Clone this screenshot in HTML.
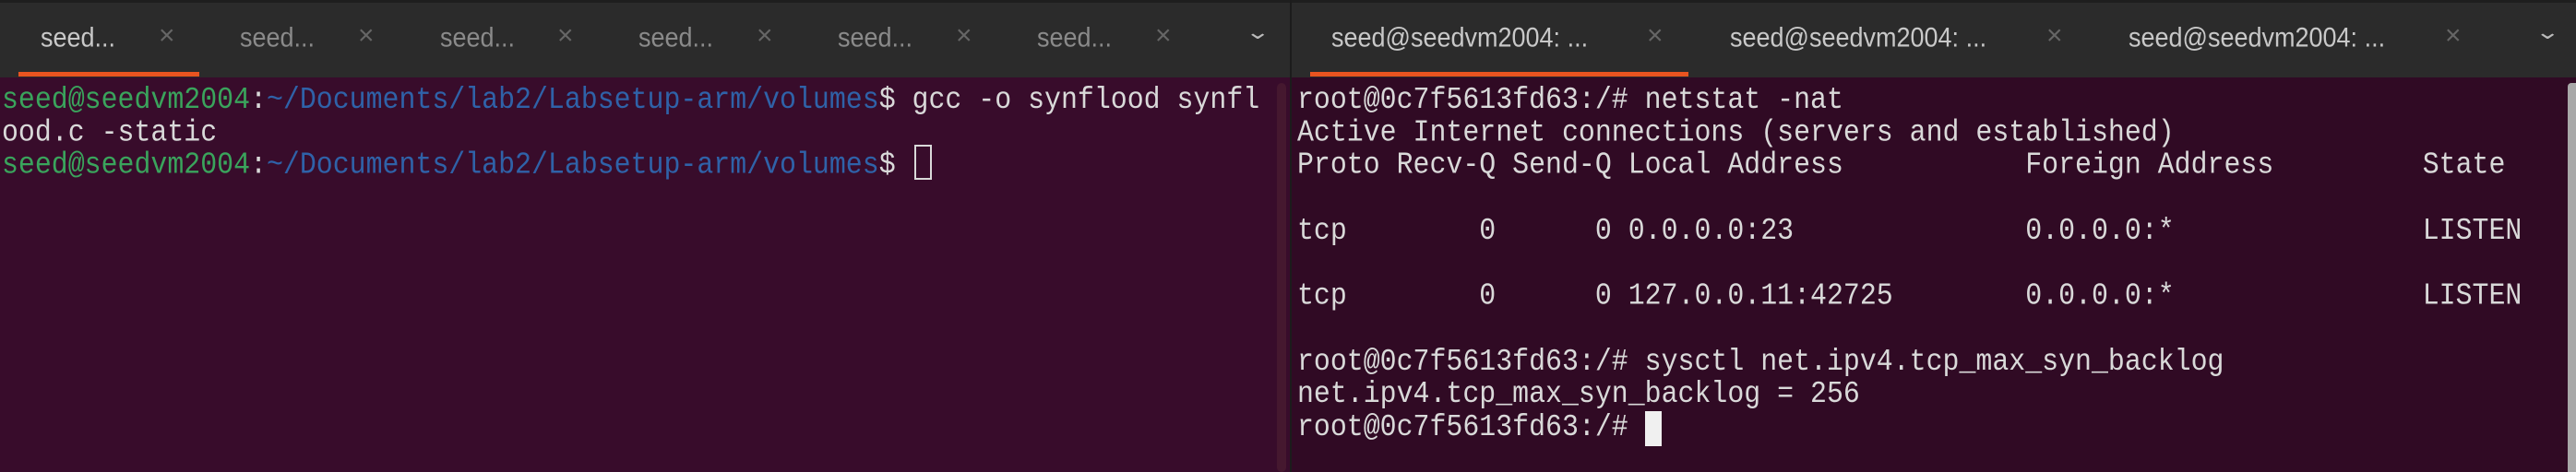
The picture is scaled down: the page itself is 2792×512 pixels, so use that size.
<!DOCTYPE html>
<html><head><meta charset="utf-8"><style>
*{margin:0;padding:0;box-sizing:border-box}
body{width:2792px;height:512px;overflow:hidden;background:#2c2c2c;position:relative;font-family:"Liberation Sans",sans-serif}
.bar{position:absolute;top:0;height:84px;background:#2b2b2b;border-top:3px solid #1e1e1e}
.tab{position:absolute;top:24px;font-size:27px;color:#8a8a8a;white-space:nowrap;transform:scaleY(1.1);transform-origin:left top}
.x{position:absolute;top:22px;font-size:30px;color:#666;font-weight:100}
.chev{position:absolute;top:22px;font-size:22px;color:#bbb;transform:scaleX(1.5)}
.ul{position:absolute;top:78px;height:5px;background:#e95420}
.term{position:absolute;top:84px;height:428px;overflow:hidden}
pre{font-family:"Liberation Mono",monospace;font-size:29.9px;line-height:31.7px;color:#d9d9d9;position:absolute;top:91px;white-space:pre;transform:scaleY(1.12);transform-origin:left top}
.g{color:#3aa45c}.b{color:#2f62a8}
</style></head><body>
<div class="bar" style="left:0;width:1398px"></div>
<div class="bar" style="left:1400px;width:1392px"></div>
<div style="position:absolute;left:1398px;top:0;width:2px;height:512px;background:#1c1c1c"></div>
<div class="tab" style="left:44px;color:#c8c8c8">seed...</div><div class="x" style="left:172px">×</div>
<div class="tab" style="left:260px">seed...</div><div class="x" style="left:388px">×</div>
<div class="tab" style="left:477px">seed...</div><div class="x" style="left:604px">×</div>
<div class="tab" style="left:692px">seed...</div><div class="x" style="left:820px">×</div>
<div class="tab" style="left:908px">seed...</div><div class="x" style="left:1036px">×</div>
<div class="tab" style="left:1124px">seed...</div><div class="x" style="left:1252px">×</div>
<div class="chev" style="left:1354px">⌄</div>
<div class="ul" style="left:20px;width:196px"></div>
<div class="tab" style="left:1443px;color:#c8c8c8">seed@seedvm2004: ...</div><div class="x" style="left:1785px">×</div>
<div class="tab" style="left:1875px;color:#c8c8c8">seed@seedvm2004: ...</div><div class="x" style="left:2218px">×</div>
<div class="tab" style="left:2307px;color:#c8c8c8">seed@seedvm2004: ...</div><div class="x" style="left:2650px">×</div>
<div class="chev" style="left:2752px">⌄</div>
<div class="ul" style="left:1420px;width:410px"></div>
<div class="term" style="left:0;width:1398px;background:#380c2b"></div>
<div style="position:absolute;left:1384px;top:90px;width:10px;height:422px;background:#45182f;border-radius:5px"></div>
<div class="term" style="left:1400px;width:1392px;background:#300a24"></div>
<div style="position:absolute;left:2783px;top:90px;width:9px;height:422px;background:#a8a8a8;border-radius:4px 0 0 0"></div>
<pre style="left:2px"><span class="g">seed@seedvm2004</span>:<span class="b">~/Documents/lab2/Labsetup-arm/volumes</span>$ gcc -o synflood synfl
ood.c -static
<span class="g">seed@seedvm2004</span>:<span class="b">~/Documents/lab2/Labsetup-arm/volumes</span>$ </pre>
<div style="position:absolute;left:991px;top:157px;width:19px;height:38px;border:2px solid #d9d9d9"></div>
<pre style="left:1406px">root@0c7f5613fd63:/# netstat -nat
Active Internet connections (servers and established)
Proto Recv-Q Send-Q Local Address           Foreign Address         State

tcp        0      0 0.0.0.0:23              0.0.0.0:*               LISTEN

tcp        0      0 127.0.0.11:42725        0.0.0.0:*               LISTEN

root@0c7f5613fd63:/# sysctl net.ipv4.tcp_max_syn_backlog
net.ipv4.tcp_max_syn_backlog = 256
root@0c7f5613fd63:/# </pre>
<div style="position:absolute;left:1783px;top:446px;width:18px;height:38px;background:#f0f0f0"></div>
</body></html>
